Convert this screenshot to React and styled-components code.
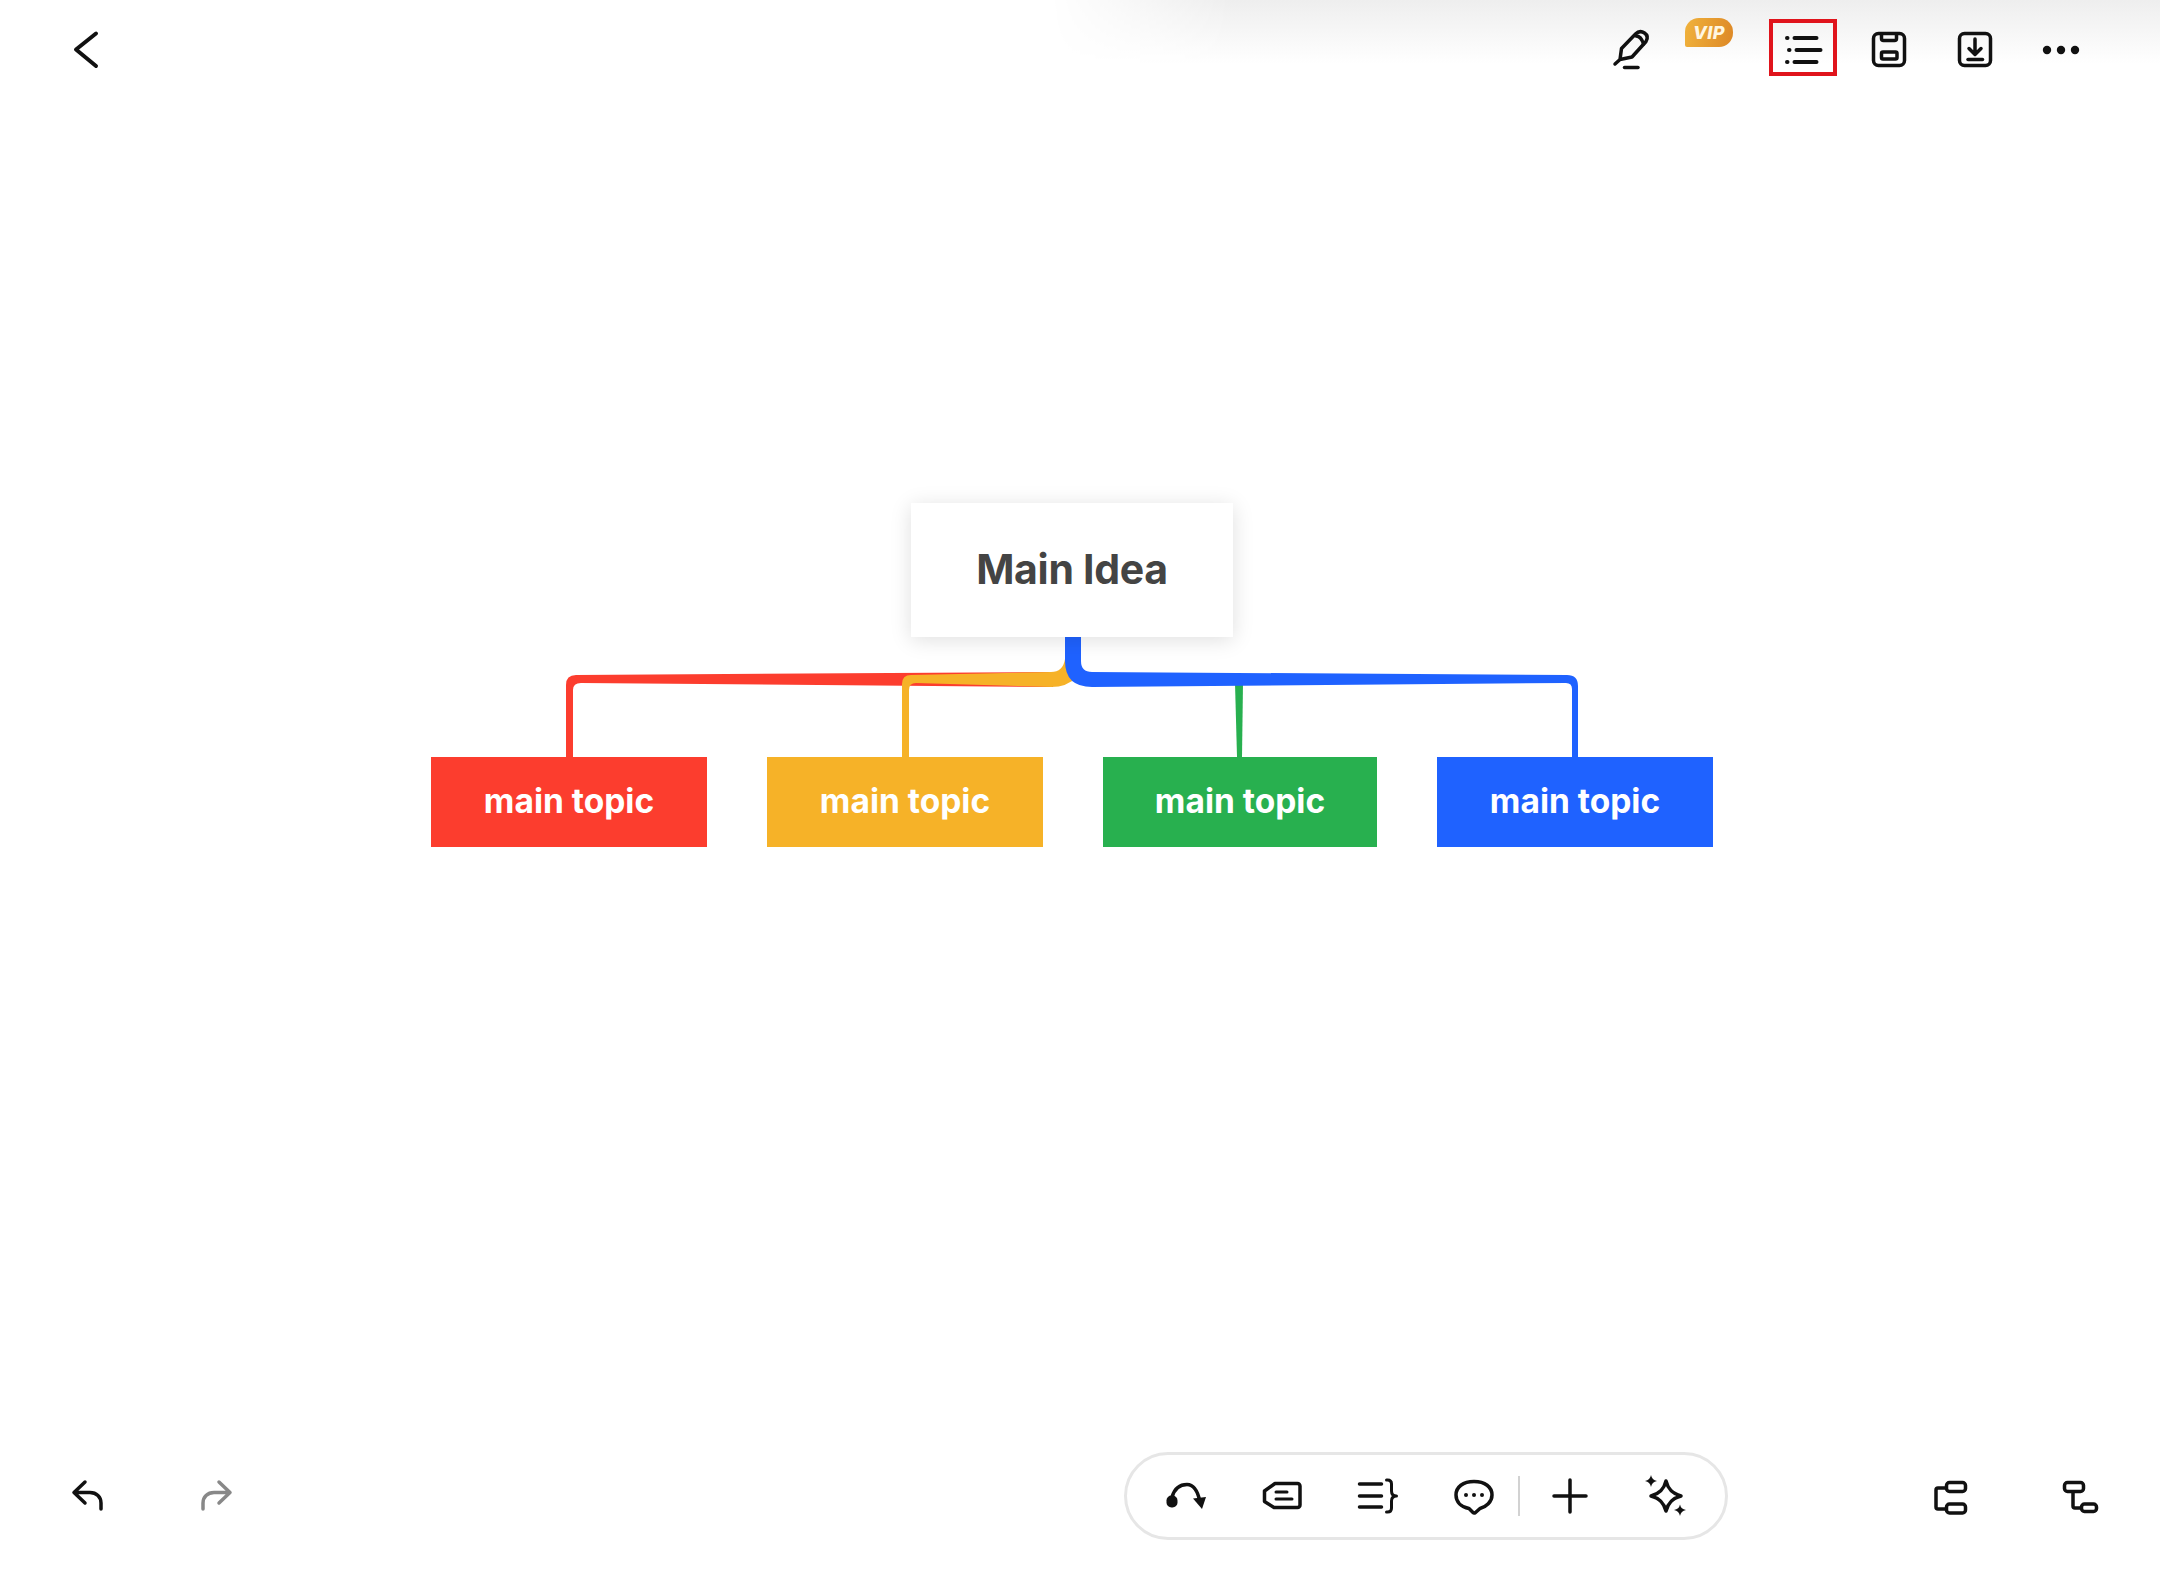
import styled, { createGlobalStyle } from 'styled-components';

const GlobalStyle = createGlobalStyle`
  html, body {
    margin: 0;
    padding: 0;
    background: #fff;
    font-family: Inter, "Liberation Sans", sans-serif;
  }
`;

const topics = [
  { color: '#fc3d2e', width: 276 },
  { color: '#f6b228', width: 276 },
  { color: '#28b04f', width: 274 },
  { color: '#1f62ff', width: 276 },
];

const Icon = ({ children, size = 48 }) => (
  <svg
    width={size}
    height={size}
    viewBox="0 0 48 48"
    fill="none"
    stroke="currentColor"
    strokeWidth="3.5"
    strokeLinecap="round"
    strokeLinejoin="round"
  >
    {children}
  </svg>
);

const Connectors = () => (
  <ConnectorSvg width="1282" height="120" viewBox="0 0 1282 120">
    <path
      fill="#fc3d2e"
      d="M135 120V48Q135 38 145 38L622 35V50L150 46Q142 46 142 53V120Z"
    />
    <path
      fill="#f6b228"
      d="M471 120V47Q471 38 480 38L620 35Q632 35 634 22L646 40Q636 50 620 50L485 46Q478 46 478 53V120Z"
    />
    <path fill="#28b04f" d="M804 46H812L811 120H806Z" />
    <path
      fill="#1f62ff"
      d="M634 0H650V24Q650 35 661 35L1136 38Q1147 38 1147 49V120H1141V52Q1141 46 1135 46L661 50Q634 50 634 24Z"
    />
  </ConnectorSvg>
);

export default function App() {
  return (
    <Page>
      <GlobalStyle />
      <TopBar>
        <IconButton $width={48}>
          <Icon>
            <path d="M34 7.5L14 23.5L34 40" strokeWidth="4" />
          </Icon>
        </IconButton>
        <TopActions>
          <IconButton $width={86}>
            <Icon>
              <path d="M8 38L13 33.5L25 31L39 15.5C41 12 40.5 9 37.5 7C34.5 5 31 5.5 28.5 8L14.5 22.5L13 33.5" />
              <path d="M29 10C32 10 35 13 36.5 18" />
              <path d="M17.5 41.5H31" />
            </Icon>
          </IconButton>
          <VipSlot>
            <VipBadge>VIP</VipBadge>
          </VipSlot>
          <IconButton $width={86}>
            <ActiveBox>
              <Icon>
                <path strokeWidth="4" d="M15.5 12H37.5M17.5 24H41.5M15.5 36H37.5" />
                <path strokeWidth="4" d="M8 12H8.5M10 24H10.5M8 36H8.5" />
              </Icon>
            </ActiveBox>
          </IconButton>
          <IconButton $width={86}>
            <Icon>
              <rect x="8.5" y="7.5" width="31" height="32" rx="5" />
              <path d="M16.5 8V12.5A2 2 0 0 0 18.5 14.5H29.5A2 2 0 0 0 31.5 12.5V8" />
              <rect x="16.5" y="26" width="15.5" height="7" rx="1.5" />
            </Icon>
          </IconButton>
          <IconButton $width={86}>
            <Icon>
              <rect x="8.5" y="7.5" width="31" height="32" rx="5" />
              <path d="M24 13V28M18 22.5L24 28.5L30 22.5" />
              <path d="M17 33.5H31.5" />
            </Icon>
          </IconButton>
          <IconButton $width={86}>
            <Icon>
              <g fill="currentColor" stroke="none">
                <circle cx="10" cy="24" r="4.2" />
                <circle cx="24" cy="24" r="4.2" />
                <circle cx="38" cy="24" r="4.2" />
              </g>
            </Icon>
          </IconButton>
        </TopActions>
      </TopBar>

      <Canvas>
        <RootNode>Main Idea</RootNode>
        <Connectors />
        <TopicRow>
          {topics.map((topic, i) => (
            <TopicNode key={i} $color={topic.color} $width={topic.width}>
              main topic
            </TopicNode>
          ))}
        </TopicRow>
      </Canvas>

      <BottomBar>
        <HistoryGroup>
          <IconButton $width={48}>
            <Icon>
              <path d="M22 10L11 20.5L22 31M11 20.5H27C33.5 20.5 38 25 38 31V37" />
            </Icon>
          </IconButton>
          <IconButton $width={48} $muted>
            <Icon>
              <path d="M26 10L37 20.5L26 31M37 20.5H21C14.5 20.5 10 25 10 31V37" />
            </Icon>
          </IconButton>
        </HistoryGroup>

        <ToolPill>
          <IconButton $width={96}>
            <Icon>
              <path d="M10 25C13 15 20 12.5 25 12.5C32 12.5 36 20 38 30" />
              <path fill="currentColor" stroke="none" d="M31 26.5L44 25L40 37Z" />
              <rect x="4.5" y="23.5" width="11" height="12" rx="5" fill="currentColor" stroke="none" />
            </Icon>
          </IconButton>
          <IconButton $width={96}>
            <Icon>
              <path d="M17 11.5H39.5A2.5 2.5 0 0 1 42 14V33A2.5 2.5 0 0 1 39.5 35.5H16L6.5 29.5V19Z" />
              <path strokeWidth="3" d="M18 20H29M18 27H34" />
            </Icon>
          </IconButton>
          <IconButton $width={96}>
            <Icon>
              <path d="M5.5 12H27.5M5.5 24H27.5M5.5 35H27.5" />
              <path
                strokeWidth="3"
                d="M32.5 8H33.5C36.5 8 37.5 9.5 37.5 12V19C37.5 22 39 24 42.5 24C39 24 37.5 26 37.5 29V36C37.5 38.5 36.5 40 33.5 40H32.5"
              />
            </Icon>
          </IconButton>
          <IconButton $width={96}>
            <Icon>
              <path d="M24 9.5C35 9.5 42 15 42 23C42 30 36 35 30 36.5L25.5 40.5Q24 41.5 23 40.5L19 36.5C11 35 6 30 6 23C6 15 13 9.5 24 9.5Z" />
              <g fill="currentColor" stroke="none">
                <circle cx="16" cy="23" r="2" />
                <circle cx="24" cy="23" r="2" />
                <circle cx="32" cy="23" r="2" />
              </g>
            </Icon>
          </IconButton>
          <PillDivider />
          <IconButton $width={96}>
            <Icon>
              <path d="M8 24H40M24 8V40" />
            </Icon>
          </IconButton>
          <IconButton $width={96}>
            <Icon>
              <path d="M24 9C26 17 30 21.5 39 24C30 26.5 26 31 24 39C22 31 18 26.5 9 24C18 21.5 22 17 24 9Z" />
              <g fill="currentColor" stroke="none">
                <path d="M9 3Q9.9 8.1 15 9Q9.9 9.9 9 15Q8.1 9.9 3 9Q8.1 8.1 9 3Z" />
                <path d="M38 32.5Q38.9 37.1 44 38Q38.9 38.9 38 44Q37.1 38.9 32 38Q37.1 37.1 38 32.5Z" />
              </g>
            </Icon>
          </IconButton>
        </ToolPill>

        <LayoutGroup>
          <IconButton $width={48}>
            <Icon>
              <rect x="19.5" y="10.5" width="19" height="9" rx="3" />
              <rect x="19.5" y="32" width="19" height="9" rx="3" />
              <path d="M19 16H11A2 2 0 0 0 9 18V35A2 2 0 0 0 11 37H19" />
            </Icon>
          </IconButton>
          <IconButton $width={48}>
            <Icon>
              <rect x="8.5" y="10.5" width="19" height="9" rx="3" />
              <rect x="25.5" y="32" width="15" height="7.5" rx="3" />
              <path d="M17 20V34A2 2 0 0 0 19 36H25" />
            </Icon>
          </IconButton>
        </LayoutGroup>
      </BottomBar>
    </Page>
  );
}

const Page = styled.div`
  position: relative;
  display: flex;
  flex-direction: column;
  width: 2160px;
  height: 1580px;
  overflow: hidden;
  background: #fff;
  color: #111;
`;

const TopBar = styled.header`
  position: relative;
  display: flex;
  align-items: center;
  justify-content: space-between;
  height: 100px;
  padding: 0 56px 0 62px;
  box-sizing: border-box;

  &::before {
    content: '';
    position: absolute;
    inset: 0 0 auto 0;
    height: 64px;
    background: linear-gradient(to bottom, #eeeeee, #ffffff);
    -webkit-mask-image: linear-gradient(to right, transparent 1050px, #000 1230px);
    mask-image: linear-gradient(to right, transparent 1050px, #000 1230px);
  }
`;

const TopActions = styled.div`
  position: relative;
  display: flex;
  align-items: center;
  height: 100%;
`;

const IconButton = styled.div`
  display: flex;
  align-items: center;
  justify-content: center;
  flex: none;
  width: ${props => props.$width}px;
  height: 48px;
  color: ${props => (props.$muted ? '#888888' : '#111111')};
`;

const VipSlot = styled.div`
  display: flex;
  align-self: flex-start;
  width: 86px;
  padding: 18px 0 0 11px;
  box-sizing: border-box;
`;

const VipBadge = styled.span`
  display: flex;
  align-items: center;
  justify-content: center;
  width: 48px;
  height: 29px;
  border-radius: 14px 14px 14px 2px;
  background: linear-gradient(100deg, #f0b23c, #dd8826);
  color: #fff6e0;
  font-size: 18px;
  font-weight: 800;
  font-style: italic;
  letter-spacing: 0.5px;
`;

const ActiveBox = styled.div`
  display: flex;
  align-items: center;
  justify-content: center;
  flex: none;
  width: 68px;
  height: 57px;
  margin-bottom: 5px;
  padding-top: 5px;
  border: 4px solid #e0141c;
  box-sizing: border-box;
`;

const Canvas = styled.main`
  display: flex;
  flex-direction: column;
  align-items: center;
  padding: 403px 16px 0 0;
`;

const RootNode = styled.div`
  position: relative;
  z-index: 1;
  display: flex;
  align-items: center;
  justify-content: center;
  width: 322px;
  height: 134px;
  padding-bottom: 2px;
  box-sizing: border-box;
  background: #fff;
  box-shadow: 0 3px 20px rgba(0, 0, 0, 0.13);
  color: #444;
  font-size: 41px;
  font-weight: 650;
  letter-spacing: -0.3px;
`;

const ConnectorSvg = styled.svg`
  display: block;
  flex: none;
`;

const TopicRow = styled.div`
  display: flex;
  gap: 60px;
`;

const TopicNode = styled.div`
  display: flex;
  align-items: center;
  justify-content: center;
  width: ${props => props.$width}px;
  height: 90px;
  padding-bottom: 2px;
  box-sizing: border-box;
  background: ${props => props.$color};
  color: #fff;
  font-size: 33.5px;
  font-weight: 650;
`;

const BottomBar = styled.footer`
  display: flex;
  align-items: center;
  height: 88px;
  margin-top: auto;
  margin-bottom: 40px;
  padding: 0 56px 0 63px;
`;

const HistoryGroup = styled.div`
  display: flex;
  gap: 82px;
`;

const ToolPill = styled.div`
  display: flex;
  align-items: center;
  height: 88px;
  margin-left: auto;
  padding: 0 11px;
  box-sizing: border-box;
  border: 3px solid #e6e6e6;
  border-radius: 44px;
  background: #fff;
`;

const PillDivider = styled.span`
  flex: none;
  width: 2px;
  height: 40px;
  margin: 0 2px 0 -4px;
  background: #d2d2d2;
`;

const LayoutGroup = styled.div`
  display: flex;
  gap: 81px;
  margin-left: 199px;
`;
